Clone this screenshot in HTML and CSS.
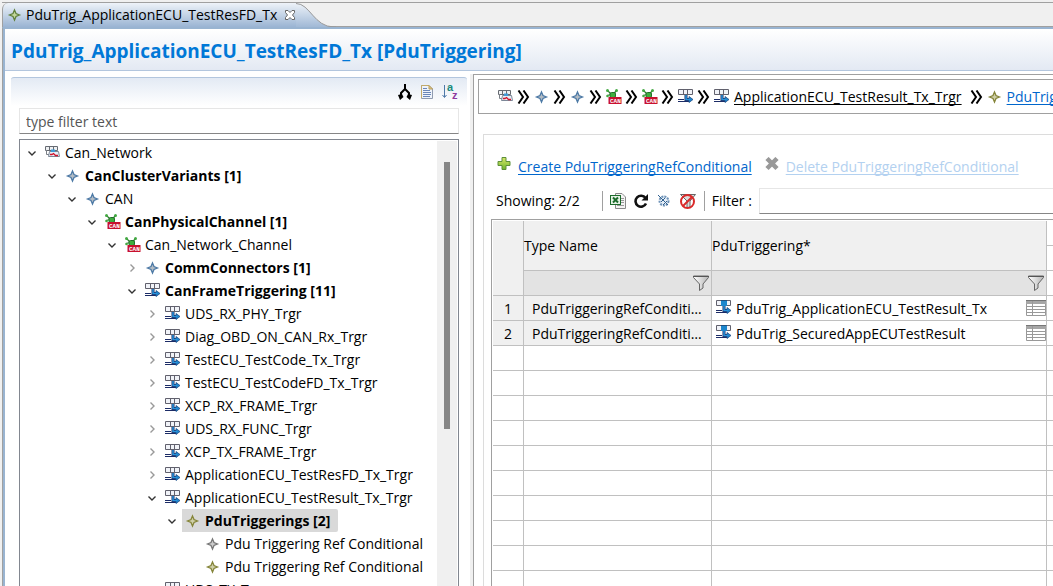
FILE: index.html
```html
<!DOCTYPE html>
<html lang="en">
<head>
  <meta charset="UTF-8" />
  <meta name="viewport" content="width=device-width, initial-scale=1.0" />
  <title>PduTrig_ApplicationECU_TestResFD_Tx</title>
  <link rel="stylesheet" href="styles.css">
</head>
<body>

  <!-- Shared icons -->
  <svg class="defs" width="0" height="0" aria-hidden="true">
    <defs>
      <linearGradient id="tabFill" x1="0" y1="0" x2="0" y2="1">
        <stop offset="0" stop-color="#eef3f9" />
        <stop offset="1" stop-color="#9ab4d3" />
      </linearGradient>
      <linearGradient id="plusFill" x1="0" y1="0" x2="0" y2="1">
        <stop offset="0" stop-color="#d8e86a" />
        <stop offset="1" stop-color="#6fb52c" />
      </linearGradient>
      <linearGradient id="funnelFill" x1="0" y1="0" x2="1" y2="0">
        <stop offset="0" stop-color="#fff" />
        <stop offset="1" stop-color="#b5b5b5" />
      </linearGradient>
    </defs>
    <symbol id="star" viewBox="0 0 16 16">
      <path d="M7.500 3L9 6.500L12.500 8L9 9.500L7.500 13L6 9.500L2.500 8L6 6.500Z" stroke-width="1.300" />
    </symbol>
    <symbol id="network" viewBox="0 0 16 16">
      <path d="M.5 1.500H12.500V5.500H.5Z" fill="#eef0f2" stroke="#666b72" />
      <path d="M4.500 1.500V5.500M8.500 1.500V5.500" stroke="#666b72" />
      <path d="M1.500 5V9.500H4" fill="none" stroke="#7b8087" />
      <path d="M4.500 6.500H13.500L14.500 11.500H3.500Z" fill="#e6eef7" stroke="#7d8898" />
      <path d="M6 4.500H10V7H6Z" fill="#3f9ad6" />
      <path d="M5 9.500H7L8.500 8.500L10.500 10.500H13" fill="none" stroke="#d0142c" stroke-width="1.300" />
    </symbol>
    <symbol id="can" viewBox="0 0 16 16">
      <path d="M1.500 1.500L5 5M10.500 1.500L7.500 5M1 6.500L5 5.500" stroke="#2b7a2b" stroke-width="1.200" fill="none" />
      <circle cx="1.500" cy="1.500" r="1.500" fill="#43a943" />
      <circle cx="10.500" cy="1.500" r="1.500" fill="#43a943" />
      <circle cx="1.500" cy="7" r="1.300" fill="#43a943" />
      <rect x="4" y="3.500" width="5.500" height="5" rx="1.500" fill="#3fae3f" stroke="#23702a" />
      <rect x="2.500" y="8" width="13" height="7" fill="#c8102e" />
      <text class="can-text" x="4" y="14">CAN</text>
    </symbol>
    <symbol id="frame" viewBox="0 0 16 16">
      <path d="M.5 .5H14.500V5.500H.5ZM5.500 .5V5.500M9.500 .5V5.500" fill="#f1f3f8" stroke="#61616d" />
      <path d="M0 10.500H6M0 12.500H11" stroke="#1c2c66" />
      <path d="M8 6V10.500H12" fill="none" stroke="#1c2c66" stroke-width="3" />
      <path d="M11 7.500L15 10.500L11 13.500Z" fill="#1f86cf" stroke="#1c4b86" stroke-width=".8" />
      <path d="M8 6V10.500H12" fill="none" stroke="#2794dc" stroke-width="1.500" />
    </symbol>
    <symbol id="pdu" viewBox="0 0 16 16">
      <path d="M.5 .5H14.500V5.500H.5Z" fill="#f1f3f8" stroke="#61616d" />
      <rect x="5" y="0" width="6" height="6" fill="#1c86cc" />
      <path d="M5 .5H11" stroke="#1c5080" />
      <path d="M0 10.500H6M0 12.500H11" stroke="#1c2c66" />
      <path d="M8 6V10.500H12" fill="none" stroke="#1c2c66" stroke-width="3" />
      <path d="M11 7.500L15 10.500L11 13.500Z" fill="#1f86cf" stroke="#1c4b86" stroke-width=".8" />
      <path d="M8 6V10.500H12" fill="none" stroke="#2794dc" stroke-width="1.500" />
    </symbol>
    <symbol id="open" viewBox="0 0 12 12">
      <path d="M2.500 4.500L6 8L9.500 4.500" fill="none" stroke="#333" stroke-width="1.400" />
    </symbol>
    <symbol id="closed" viewBox="0 0 12 12">
      <path d="M4.500 2.500L8 6L4.500 9.500" fill="none" stroke="#999" stroke-width="1.400" />
    </symbol>
    <symbol id="crumb" viewBox="0 0 12 14">
      <path d="M1 .5L5.500 7L1 13.500M6 .5L10.500 7L6 13.500" fill="none" stroke="#000" stroke-width="2" />
    </symbol>
    <symbol id="funnel" viewBox="0 0 16 16">
      <path d="M.5 1H15.500V2.500L10 9V13L6.500 15.500V9L.5 2.500Z" fill="url(#funnelFill)" stroke="#666" />
      <path d="M0 1.500H16" stroke="#555" />
    </symbol>
    <symbol id="grid" viewBox="0 0 20 16">
      <path d="M.5 .5H19.500V15.500H.5Z" fill="#fff" stroke="#999" />
      <path d="M0 0H20V4H0Z" fill="#a6a6a6" />
      <path d="M0 .5H20" stroke="#777" />
      <path d="M1 6.500H19M1 9.500H19M1 12.500H19M6.500 1V15" stroke="#999" />
    </symbol>
  </svg>

  <!-- Editor tab -->
  <div class="tabs" role="tablist">
    <div class="tab" role="tab" aria-selected="true">
      <svg class="icon green"><use href="#star" /></svg>
      <span class="tab-name">PduTrig_ApplicationECU_TestResFD_Tx</span>
      <button class="tab-close" aria-label="Close">
        <svg width="12" height="12" viewBox="0 0 12 12"><path d="M1.500 1.500H4L6 3.500L8 1.500H10.500V3.500L8.500 6L10.500 8.500V10.500H8L6 8.500L4 10.500H1.500V8.500L3.500 6L1.500 3.500Z" fill="#fff" stroke="#666" /></svg>
      </button>
    </div>
    <svg class="tab-curve" viewBox="0 0 40 26">
      <path d="M0 0C14 0 18 24 38 24H40V26H0Z" fill="url(#tabFill)" />
      <path d="M0 .5C14 .5 18 24 38 24H40" fill="none" stroke="#999" />
    </svg>
  </div>

  <div class="editor">
    <h1>PduTrig_ApplicationECU_TestResFD_Tx [PduTriggering]</h1>

    <div class="panes">
      <!-- Model tree -->
      <aside class="outline">
        <div class="outline-tools">
          <button aria-label="Split">
            <svg width="14" height="16" viewBox="0 0 14 16"><path d="M7 0V6M7 5L3 9V12M7 5L11 9V12" fill="none" stroke="#000" stroke-width="2" /><path d="M0 11L4 10L5.500 13L2 16ZM14 11L10 10L8.500 13L12 16Z" fill="#000" /></svg>
          </button>
          <button aria-label="Details">
            <svg width="12" height="14" viewBox="0 0 12 14"><path d="M.5 .5H8L11.500 4V13.500H.5Z" fill="#eef3fb" stroke="#8f9bb0" /><path d="M.5 13V.5H8" fill="none" stroke="#c2aa6a" /><path d="M8 .5V4H11.500Z" fill="#e6cd8a" stroke="#b89d5a" /><path d="M2 3.500H6M2 5.500H9M2 7.500H10M2 9.500H10M2 11.500H9" stroke="#6a86b8" /></svg>
          </button>
          <button aria-label="Sort">
            <svg width="17" height="18" viewBox="0 0 17 18"><path d="M2.500 2V14M.5 12L2.500 14.500L4.500 12" fill="none" stroke="#4d78a8" /><text class="sort-a" x="5" y="8">a</text><text class="sort-z" x="10" y="16">z</text></svg>
          </button>
        </div>
        <input class="tree-filter" type="text" placeholder="type filter text" aria-label="Tree filter">
        <div class="tree-box">
          <ul class="tree">
            <li>
              <div class="node"><svg class="twist"><use href="#open" /></svg><svg class="icon"><use href="#network" /></svg><span>Can_Network</span></div>
              <ul>
                <li>
                  <div class="node"><svg class="twist"><use href="#open" /></svg><svg class="icon blue"><use href="#star" /></svg><b>CanClusterVariants [1]</b></div>
                  <ul>
                    <li>
                      <div class="node"><svg class="twist"><use href="#open" /></svg><svg class="icon blue"><use href="#star" /></svg><span>CAN</span></div>
                      <ul>
                        <li>
                          <div class="node"><svg class="twist"><use href="#open" /></svg><svg class="icon"><use href="#can" /></svg><b>CanPhysicalChannel [1]</b></div>
                          <ul>
                            <li>
                              <div class="node"><svg class="twist"><use href="#open" /></svg><svg class="icon"><use href="#can" /></svg><span>Can_Network_Channel</span></div>
                              <ul>
                                <li>
                                  <div class="node"><svg class="twist"><use href="#closed" /></svg><svg class="icon blue"><use href="#star" /></svg><b>CommConnectors [1]</b></div>
                                </li>
                                <li>
                                  <div class="node"><svg class="twist"><use href="#open" /></svg><svg class="icon"><use href="#frame" /></svg><b>CanFrameTriggering [11]</b></div>
                                  <ul>
                                    <li><div class="node"><svg class="twist"><use href="#closed" /></svg><svg class="icon"><use href="#frame" /></svg><span>UDS_RX_PHY_Trgr</span></div></li>
                                    <li><div class="node"><svg class="twist"><use href="#closed" /></svg><svg class="icon"><use href="#frame" /></svg><span>Diag_OBD_ON_CAN_Rx_Trgr</span></div></li>
                                    <li><div class="node"><svg class="twist"><use href="#closed" /></svg><svg class="icon"><use href="#frame" /></svg><span>TestECU_TestCode_Tx_Trgr</span></div></li>
                                    <li><div class="node"><svg class="twist"><use href="#closed" /></svg><svg class="icon"><use href="#frame" /></svg><span>TestECU_TestCodeFD_Tx_Trgr</span></div></li>
                                    <li><div class="node"><svg class="twist"><use href="#closed" /></svg><svg class="icon"><use href="#frame" /></svg><span>XCP_RX_FRAME_Trgr</span></div></li>
                                    <li><div class="node"><svg class="twist"><use href="#closed" /></svg><svg class="icon"><use href="#frame" /></svg><span>UDS_RX_FUNC_Trgr</span></div></li>
                                    <li><div class="node"><svg class="twist"><use href="#closed" /></svg><svg class="icon"><use href="#frame" /></svg><span>XCP_TX_FRAME_Trgr</span></div></li>
                                    <li><div class="node"><svg class="twist"><use href="#closed" /></svg><svg class="icon"><use href="#frame" /></svg><span>ApplicationECU_TestResFD_Tx_Trgr</span></div></li>
                                    <li>
                                      <div class="node"><svg class="twist"><use href="#open" /></svg><svg class="icon"><use href="#frame" /></svg><span>ApplicationECU_TestResult_Tx_Trgr</span></div>
                                      <ul>
                                        <li>
                                          <div class="node selected"><svg class="twist"><use href="#open" /></svg><svg class="icon olive"><use href="#star" /></svg><b>PduTriggerings [2]</b></div>
                                          <ul>
                                            <li><div class="node leaf"><svg class="icon grey"><use href="#star" /></svg><span>Pdu Triggering Ref Conditional</span></div></li>
                                            <li><div class="node leaf"><svg class="icon olive"><use href="#star" /></svg><span>Pdu Triggering Ref Conditional</span></div></li>
                                          </ul>
                                        </li>
                                      </ul>
                                    </li>
                                    <li><div class="node"><svg class="twist"></svg><svg class="icon"><use href="#frame" /></svg><span>UDS_TX_Trgr</span></div></li>
                                  </ul>
                                </li>
                              </ul>
                            </li>
                          </ul>
                        </li>
                      </ul>
                    </li>
                  </ul>
                </li>
              </ul>
            </li>
          </ul>
          <div class="scrollbar"><div class="thumb"></div></div>
        </div>
      </aside>

      <div class="sash"></div>

      <!-- Details -->
      <main class="details">
        <nav class="crumbs" aria-label="Breadcrumb">
          <svg class="icon"><use href="#network" /></svg>
          <svg class="sep"><use href="#crumb" /></svg>
          <svg class="icon blue"><use href="#star" /></svg>
          <svg class="sep"><use href="#crumb" /></svg>
          <svg class="icon blue"><use href="#star" /></svg>
          <svg class="sep"><use href="#crumb" /></svg>
          <svg class="icon"><use href="#can" /></svg>
          <svg class="sep"><use href="#crumb" /></svg>
          <svg class="icon"><use href="#can" /></svg>
          <svg class="sep"><use href="#crumb" /></svg>
          <svg class="icon"><use href="#frame" /></svg>
          <svg class="sep"><use href="#crumb" /></svg>
          <svg class="icon"><use href="#frame" /></svg>
          <a class="crumb-link" href="#">ApplicationECU_TestResult_Tx_Trgr</a>
          <svg class="sep"><use href="#crumb" /></svg>
          <svg class="icon olive"><use href="#star" /></svg>
          <a class="crumb-link current" href="#">PduTriggerings</a>
        </nav>

        <section class="section">
          <div class="actions">
            <svg width="14" height="14" viewBox="0 0 14 14"><path d="M5 .5H9V4.500H13V8.500H9V12.500H5V8.500H1V4.500H5Z" fill="url(#plusFill)" stroke="#5d8f3a" /></svg>
            <a href="#">Create PduTriggeringRefConditional</a>
            <svg width="14" height="14" viewBox="0 0 14 14"><path d="M2 1.500L12 11.500M12 1.500L2 11.500" stroke="#999" stroke-width="4.500" /></svg>
            <a class="disabled" href="#" aria-disabled="true">Delete PduTriggeringRefConditional</a>
          </div>

          <div class="table-tools">
            <span class="showing">Showing: 2/2</span>
            <span class="divider"></span>
            <button aria-label="Export to Excel">
              <svg width="16" height="16" viewBox="0 0 16 16"><path d="M5.500 .5H12L15.500 4V15.500H5.500Z" fill="#f4f4f4" stroke="#8a8a8a" /><path d="M11 5.500H14M11 7.500H14M11 9.500H14M7 12.500H14" stroke="#999" /><rect x=".5" y="2.500" width="10" height="9" fill="#e6f3e6" stroke="#1d6b2c" /><path d="M3 4.500L8 9.500M8 4.500L3 9.500" stroke="#1d6b2c" stroke-width="2" /></svg>
            </button>
            <button aria-label="Refresh">
              <svg width="16" height="16" viewBox="0 0 16 16"><path d="M12.500 5A5.500 5.500 0 1 0 13 10.500" fill="none" stroke="#111" stroke-width="2.600" /><path d="M15 1V7.500H8.500Z" fill="#111" /></svg>
            </button>
            <button aria-label="Configure">
              <svg width="16" height="16" viewBox="0 0 16 16"><circle cx="8" cy="8" r="4.500" fill="#e6eff8" stroke="#6f93b8" stroke-width="2" stroke-dasharray="2 1" /><path d="M2 2L12 12M5 9L9 5M7 12L11 8" stroke="#31608f" /></svg>
            </button>
            <button aria-label="Clear filters">
              <svg width="18" height="16" viewBox="0 0 18 16"><path d="M1.500 1.500H16.500L11 8V14L8 15V8Z" fill="#ddd" stroke="#666" /><circle cx="8.500" cy="8.500" r="6.500" fill="none" stroke="#d92a2a" stroke-width="2" /><path d="M4 13L13 4" stroke="#d92a2a" stroke-width="2" /></svg>
            </button>
            <span class="divider"></span>
            <label for="tableFilter">Filter :</label>
            <input id="tableFilter" type="text">
          </div>

          <div class="table-box">
            <table>
              <colgroup>
                <col class="col-number">
                <col class="col-type">
                <col class="col-pdu">
                <col>
              </colgroup>
              <thead>
                <tr>
                  <th rowspan="3"></th>
                  <th rowspan="2" scope="col">Type Name</th>
                  <th rowspan="2" scope="col">PduTriggering*</th>
                  <td></td>
                </tr>
                <tr><td></td></tr>
                <tr>
                  <td class="filter-cell"><svg class="icon"><use href="#funnel" /></svg></td>
                  <td class="filter-cell"><svg class="icon"><use href="#funnel" /></svg></td>
                  <td></td>
                </tr>
              </thead>
              <tbody>
                <tr>
                  <th scope="row">1</th>
                  <td class="type">PduTriggeringRefConditional</td>
                  <td><div class="pdu"><svg class="icon"><use href="#pdu" /></svg><span>PduTrig_ApplicationECU_TestResult_Tx</span><svg class="grid-icon"><use href="#grid" /></svg></div></td>
                  <td></td>
                </tr>
                <tr>
                  <th scope="row">2</th>
                  <td class="type">PduTriggeringRefConditional</td>
                  <td><div class="pdu"><svg class="icon"><use href="#pdu" /></svg><span>PduTrig_SecuredAppECUTestResult</span><svg class="grid-icon"><use href="#grid" /></svg></div></td>
                  <td></td>
                </tr>
                <tr><td></td><td></td><td></td><td></td></tr>
                <tr><td></td><td></td><td></td><td></td></tr>
                <tr><td></td><td></td><td></td><td></td></tr>
                <tr><td></td><td></td><td></td><td></td></tr>
                <tr><td></td><td></td><td></td><td></td></tr>
                <tr><td></td><td></td><td></td><td></td></tr>
                <tr><td></td><td></td><td></td><td></td></tr>
                <tr><td></td><td></td><td></td><td></td></tr>
                <tr><td></td><td></td><td></td><td></td></tr>
                <tr><td></td><td></td><td></td><td></td></tr>
              </tbody>
            </table>
          </div>
        </section>
      </main>
    </div>
  </div>

</body>
</html>
```
FILE: styles.css
```css
* {
  box-sizing: border-box;
}

body {
  margin: 0;
  height: 100vh;
  padding: 2px 0 0 2px;
  background: #f0f0f0;
  color: #000;
  font-family: "Open Sans", "Noto Sans", sans-serif;
  font-size: 14px;
  line-height: 20px;
  display: flex;
  flex-direction: column;
  overflow: hidden;
}

button {
  display: flex;
  padding: 0;
  border: 0;
  background: none;
}

input {
  font: inherit;
  border: 1px solid #e6e6e6;
  border-bottom-color: #868686;
  background: #fff;
}

.defs {
  position: absolute;
}

.icon {
  width: 16px;
  height: 16px;
  flex: none;
}

.blue {
  fill: #b4bcc4;
  stroke: #4d7aa6;
}

.olive {
  fill: #cfcfa8;
  stroke: #85853a;
}

.green {
  fill: #c3d69b;
  stroke: #60803c;
}

.grey {
  fill: #ccc;
  stroke: #777;
}

.can-text {
  font: bold 6px "Liberation Mono", monospace;
  fill: #fff;
}

.sort-a,
.sort-z {
  font: bold 11px "Liberation Sans", sans-serif;
  fill: #1a8a7c;
}

.sort-z {
  fill: #8e3a9e;
}

/* Tab strip */
.tabs {
  display: flex;
  flex: none;
  height: 25px;
  border-top: 1px solid #a0a0a0;
  box-shadow: inset 0 -1px #a0a0a0;
}

.tab {
  display: flex;
  align-items: center;
  padding-left: 4px;
  border-left: 1px solid #a0a0a0;
  border-radius: 6px 0 0 0;
  background: linear-gradient(#eef3f9, #9ab4d3);
}

.tab-name {
  margin: 0 7px 0 3px;
}

.tab-curve {
  width: 40px;
  height: 26px;
}

/* Editor */
.editor {
  display: flex;
  flex-direction: column;
  flex: 1;
  min-height: 0;
  border-top: 2px solid #99b4d1;
  border-left: 1px solid #a0a0a0;
  box-shadow: inset 2px 0 #99b4d1;
  background: #fff;
}

h1 {
  flex: none;
  height: 42px;
  margin: 0 0 3px 2px;
  padding: 0 6px;
  border-bottom: 1px solid #b3c6de;
  background: linear-gradient(#fff, #e3e9f3);
  color: #0078d7;
  font-size: 19px;
  line-height: 44px;
  white-space: nowrap;
}

.panes {
  display: flex;
  flex: 1;
  min-height: 0;
}

.outline {
  display: flex;
  flex-direction: column;
  width: 456px;
  flex: none;
  margin: 3px 3px 0 8px;
  padding: 0 8px;
  border-top: 1px solid #b3c6de;
  border-radius: 3px 3px 0 0;
  background: linear-gradient(#e3eaf4, #fff 28px);
}

.outline-tools {
  display: flex;
  align-items: center;
  justify-content: flex-end;
  gap: 9px;
  height: 30px;
  padding-bottom: 3px;
  flex: none;
}

.tree-filter {
  flex: none;
  height: 26px;
  margin-bottom: 5px;
  padding: 0 6px;
}

.tree-filter::placeholder {
  color: #555;
}

.tree-box {
  display: flex;
  flex: 1;
  min-height: 0;
  padding: 1px 1px 0 0;
  border: 1px solid #828790;
  border-bottom: 0;
}

.tree {
  flex: 1;
  padding-left: 6px;
}

ul {
  margin: 0;
  padding: 0 0 0 20px;
  list-style: none;
}

.node {
  display: flex;
  align-items: center;
  height: 23px;
  white-space: nowrap;
}

.twist {
  width: 12px;
  height: 12px;
  margin-right: 7px;
}

.node .icon {
  margin-right: 4px;
}

.leaf {
  padding-left: 19px;
}

.selected {
  width: max-content;
  padding-right: 8px;
  background: linear-gradient(90deg, transparent 16px, #d9d9d9 16px);
  border-radius: 2px;
}

.scrollbar {
  width: 20px;
  padding: 21px 7px 0;
  background: #f0f0f0;
}

.thumb {
  height: 63%;
  background: #868686;
}

.sash {
  width: 3px;
  background: #f0f0f0;
}

/* Details */
.details {
  flex: 1;
  min-width: 0;
  padding: 4px 0 0 4px;
  border: solid #a0a0a0;
  border-width: 1px 0 0 1px;
  display: flex;
  flex-direction: column;
}

.crumbs {
  display: flex;
  align-items: center;
  flex: none;
  height: 35px;
  padding-left: 19px;
  border: solid #a0a0a0;
  border-width: 1px 0 1px 1px;
  overflow: hidden;
}

.sep {
  width: 13px;
  height: 14px;
  flex: none;
  margin: 0 4px 0 3px;
}

a {
  color: #0066cc;
  text-decoration: underline 1px;
  text-decoration-skip-ink: none;
  text-underline-offset: 2px;
  white-space: nowrap;
}

a.crumb-link {
  margin: 0 5px 0 4px;
  color: #000;
}

a.current {
  color: #0066cc;
}

.section {
  display: flex;
  flex-direction: column;
  flex: 1;
  min-height: 0;
  margin: 20px 0 0 5px;
  padding: 22px 0 0 7px;
  border: solid #dcdcdc;
  border-width: 1px 0 0 1px;
}

.actions {
  display: flex;
  gap: 7px;
  padding-left: 6px;
}

.actions a + svg {
  margin-left: 6px;
}

a.disabled {
  color: #b3d1f0;
}

.table-tools {
  display: flex;
  align-items: center;
  height: 26px;
  margin: 11px 0 5px;
  padding-left: 5px;
  gap: 7px;
}

.showing {
  margin-right: 15px;
}

.divider {
  width: 1px;
  height: 20px;
  background: #a0a0a0;
}

.table-tools label {
  white-space: nowrap;
}

.table-tools input {
  flex: 1;
  min-width: 0;
  height: 26px;
  border-right: 0;
}

.table-box {
  flex: 1;
  min-height: 0;
  overflow: hidden;
  padding: 1px 0 0 1px;
  border: solid #a0a0a0;
  border-width: 1px 0 0 1px;
}

table {
  width: 100%;
  table-layout: fixed;
  border-collapse: separate;
  border-spacing: 0;
}

.col-number {
  width: 31px;
}

.col-type {
  width: 188px;
}

.col-pdu {
  width: 335px;
}

th,
td {
  height: 25px;
  padding: 0;
  border: solid #c0c0c0;
  border-width: 0 1px 1px 0;
  font-weight: normal;
  text-align: left;
}

td:last-child {
  border-right: 0;
}

th {
  background: #f0f0f0;
}

tbody th {
  padding-top: 2px;
  text-align: center;
}

.filter-cell {
  background: #e3e3e3;
  line-height: 0;
  text-align: right;
  padding-right: 2px;
}

td.type {
  padding: 2px 6px 0 8px;
  overflow: hidden;
  text-overflow: ellipsis;
  white-space: nowrap;
  background: #f0f0f0;
}

.pdu {
  display: flex;
  align-items: center;
  padding-left: 4px;
  white-space: nowrap;
}

.pdu span {
  flex: 1;
  padding: 2px 0 0 4px;
}

.grid-icon {
  width: 20px;
  height: 16px;
}
```
